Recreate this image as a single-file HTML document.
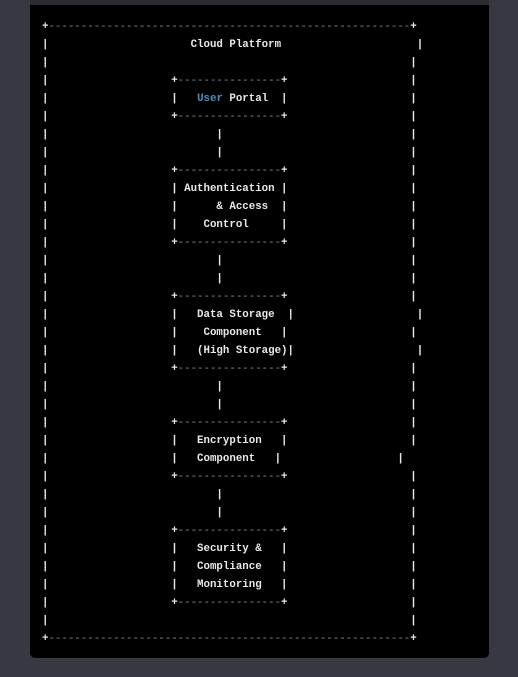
<!DOCTYPE html>
<html><head><meta charset="utf-8">
<style>
html,body{margin:0;padding:0;}
body{width:518px;height:677px;background:#383843;position:relative;overflow:hidden;}
.top{position:absolute;left:30px;top:0;width:459px;height:5px;background:#2b2b31;}
.panel{position:absolute;left:30px;top:5px;width:459px;height:653px;background:#000;border-radius:0 0 5px 5px;}
pre{position:absolute;left:42px;top:18px;margin:0;font-family:"Liberation Mono",monospace;font-size:10.78px;line-height:18px;color:#e8e8e8;font-weight:bold;white-space:pre;}
i{font-style:normal;color:#8a8a8a;font-weight:normal;}
b{font-weight:bold;color:#4f8fc0;}
</style></head><body>
<div class="top"></div>
<div class="panel"></div>
<pre>+<i>--------------------------------------------------------</i>+
|                      Cloud Platform                     |
|                                                        |
|                   +<i>----------------</i>+                   |
|                   |   <b>User</b> Portal  |                   |
|                   +<i>----------------</i>+                   |
|                          |                             |
|                          |                             |
|                   +<i>----------------</i>+                   |
|                   | Authentication |                   |
|                   |      &amp; Access  |                   |
|                   |    Control     |                   |
|                   +<i>----------------</i>+                   |
|                          |                             |
|                          |                             |
|                   +<i>----------------</i>+                   |
|                   |   Data Storage  |                   |
|                   |    Component   |                   |
|                   |   (High Storage)|                   |
|                   +<i>----------------</i>+                   |
|                          |                             |
|                          |                             |
|                   +<i>----------------</i>+                   |
|                   |   Encryption   |                   |
|                   |   Component   |                  |
|                   +<i>----------------</i>+                   |
|                          |                             |
|                          |                             |
|                   +<i>----------------</i>+                   |
|                   |   Security &amp;   |                   |
|                   |   Compliance   |                   |
|                   |   Monitoring   |                   |
|                   +<i>----------------</i>+                   |
|                                                        |
+<i>--------------------------------------------------------</i>+</pre>
</body></html>
